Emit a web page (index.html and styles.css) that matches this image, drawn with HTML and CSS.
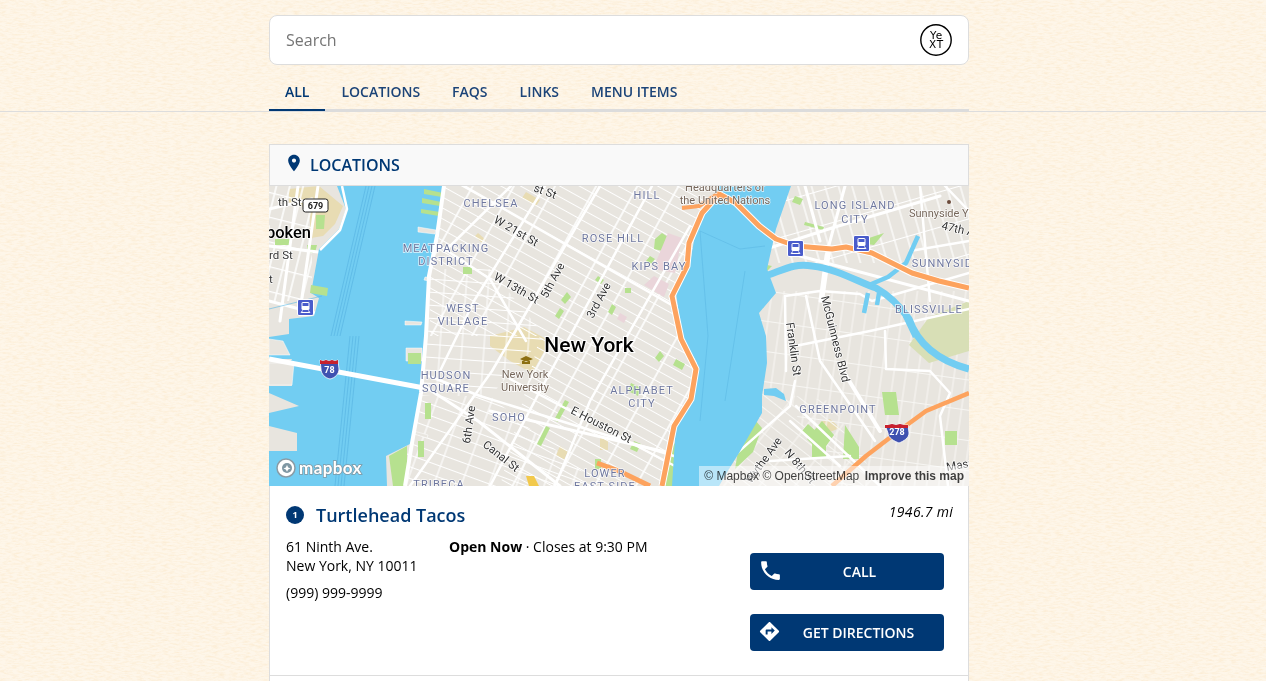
FILE: index.html
```html
<!DOCTYPE html>
<html lang="en">
<head>
<meta charset="utf-8">
<title>Answers</title>
<link rel="stylesheet" href="styles.css">
</head>
<body>
<svg class="paper" aria-hidden="true" width="1266" height="681">
  <filter id="grain" x="0" y="0" width="100%" height="100%">
    <feTurbulence type="fractalNoise" baseFrequency="0.16 0.55" numOctaves="3" seed="7"/>
    <feColorMatrix type="matrix" values="0 0 0 0 0.96  0 0 0 0 0.80  0 0 0 0 0.58  2.4 0 0 0 -0.95"/>
  </filter>
  <rect width="1266" height="681" fill="#fef6e9"/>
  <rect width="1266" height="681" filter="url(#grain)" opacity=".55"/>
</svg>

<header class="header">
  <div class="column">
    <div class="search">
      <span class="search-placeholder">Search</span>
      <svg class="yext" viewBox="0 0 32 32" width="32" height="32" role="img" aria-label="Yext">
        <circle cx="16" cy="16" r="15.2" fill="#fff" stroke="#000" stroke-width="1.4"/>
        <text class="yext-text" x="16.5" y="15">Ye</text>
        <text class="yext-text" x="16.5" y="23.5">XT</text>
      </svg>
    </div>
    <nav class="tabs">
      <a class="tab tab-active">ALL</a>
      <a class="tab">LOCATIONS</a>
      <a class="tab">FAQS</a>
      <a class="tab">LINKS</a>
      <a class="tab">MENU ITEMS</a>
    </nav>
  </div>
</header>

<main class="column main">
  <section class="card">
    <h2 class="card-title">
      <svg class="pin" viewBox="0 0 24 24" width="20" height="20"><path d="M12 2C8.13 2 5 5.13 5 9c0 5.25 7 13 7 13s7-7.75 7-13c0-3.87-3.13-7-7-7zm0 9.5c-1.38 0-2.5-1.12-2.5-2.5s1.12-2.5 2.5-2.5 2.5 1.12 2.5 2.5-1.12 2.5-2.5 2.5z"/></svg>
      <span>LOCATIONS</span>
    </h2>

    <div class="map">
      <svg class="map-svg" viewBox="269 185 700 300" width="700" height="300" role="img" aria-label="Map of New York">
        <defs>
          <pattern id="g-man" width="36" height="9.5" patternUnits="userSpaceOnUse" patternTransform="rotate(29 600 300)">
            <path d="M0 .5H36" stroke="#fff" stroke-width="1"/><path d="M1 0V9.5" stroke="#fff" stroke-width="1.6"/>
          </pattern>
          <pattern id="g-vil" width="22" height="13" patternUnits="userSpaceOnUse" patternTransform="rotate(4)">
            <path d="M0 .5H22M1 0V13" stroke="#fff" stroke-width="1"/>
          </pattern>
          <pattern id="g-low" width="26" height="11" patternUnits="userSpaceOnUse" patternTransform="rotate(20)">
            <path d="M0 .5H26M1 0V11" stroke="#fff" stroke-width="1.1"/>
          </pattern>
          <pattern id="g-hob" width="13" height="24" patternUnits="userSpaceOnUse" patternTransform="rotate(14)">
            <path d="M0 .5H13M1 0V24" stroke="#fff" stroke-width="1.5"/>
          </pattern>
          <pattern id="g-qns" width="13" height="34" patternUnits="userSpaceOnUse" patternTransform="rotate(-16)">
            <path d="M0 .5H13M1 0V34" stroke="#fff" stroke-width="1.2"/>
          </pattern>
          <pattern id="g-grn" width="12" height="30" patternUnits="userSpaceOnUse" patternTransform="rotate(8)">
            <path d="M0 .5H12M1 0V30" stroke="#f7f6f3" stroke-width="1.1"/>
          </pattern>
          <pattern id="g-wil" width="28" height="10" patternUnits="userSpaceOnUse" patternTransform="rotate(38)">
            <path d="M0 .5H28M1 0V10" stroke="#f7f6f3" stroke-width="1.1"/>
          </pattern>
          <symbol id="train" viewBox="0 0 17 17">
            <rect x=".5" y=".5" width="16" height="16" rx="1.5" fill="#4a5ccb" stroke="#fff"/>
            <rect x="4.5" y="3" width="8" height="8" rx="1.5" fill="#fff"/>
            <rect x="5.5" y="4" width="6" height="3" fill="#4a5ccb"/>
            <path d="M5.5 11.5 4 14M11.5 11.5 13 14M4.5 13.5H12.5" stroke="#fff" fill="none" stroke-width="1"/>
          </symbol>
        </defs>

        <rect x="269" y="185" width="700" height="300" fill="#e8e5df"/>
        <!-- campuses lie under the street grid -->
        <g fill="#e8dcb3">
          <path d="M490 335l34-9 26 14-18 32-22-12-20-15zM526 191l14 8-4 6-14-8zM478 232l8 7-4 3-7-7zM820 421l10-3 10 9-10 4zM600 437h8v12h-8zM560 445l8 5-4 9-8-5z"/>
          <path d="M289 188l30-3 24 20-8 18-12 12-12 2-2-30-20-4zM310 225l6 5-4 8-5-2z"/>
        </g>
        <path fill="url(#g-hob)" d="M269 185H312V300H269Z"/>
        <path fill="url(#g-man)" d="M430 185H705V485H500L540 335H430Z"/>
        <path fill="url(#g-vil)" d="M425 268H490L545 335 490 395H420Z"/>
        <path fill="url(#g-low)" d="M415 395H490L600 485H400Z"/>
        <path fill="url(#g-qns)" d="M755 185H969V262H755Z"/>
        <path fill="url(#g-grn)" d="M760 290H969V485H830L790 400 760 380Z"/>
        <path fill="url(#g-wil)" d="M762 390 830 400 880 485H700Z"/>

        <!-- parks -->
        <g fill="#b6e18f">
          <path d="M316 214h9l-1 14h-8zM275 238h16v6h-16zM307 244h10l-2 8h-8z"/>
          <path d="M463 266h9v7h-9zM567 291l4 5-6 7-4-4zM598 275l6 4-3 4-6-4zM612 303l4 3-4 8-4-3zM564 310l-5 8-4-3 5-8z"/>
          <path d="M662 232l9 6-8 12-9-2 1-10zM650 255l5 3-4 5-5-3zM625 287h6v5h-6z"/>
          <path d="M660 350l4 5-5 6-4-4zM565 399l4 2-11 20-4-2zM546 425l4 2-9 18-4-2zM595 458h6v10h-6z"/>
          <path d="M425 402h6v16h-6zM418 440h6v16h-6z"/>
          <path d="M683 430l-8 55h-10l8-40zM634 440l7 3-4 8-7-3zM676 358l9 5-3 6-9-5zM631 382l10 5-3 8-10-5z"/>
          <path d="M882 391h14l3 23h-14zM822 420l12 14-13 18-14-14zM808 423l10 9-7 7-9-9zM845 424l14 22v12h-16zM812 440l14 0v16h-14zM945 430h12v14h-12z"/>
          <path d="M748 411l14 16-9 24-18 17 3-18zM762 215l6-10 3 5-5 10zM795 195l8 3-3 6-8-3zM805 221l19 5-1 3-19-5zM884 232l-10 12-8-1 3-6zM762 263l10 2-6 6-11-3-2-11 3-8 4 8zM770 296l-7 11-6-3 7-11z"/>
        </g>
        <path fill="#d8dfb6" d="M969 300v50l-40 12-20-18 20-28z"/>
        <g fill="#ead5da">
          <path d="M668 232l14 5-7 35-22-4zM654 275l15 8-5 13-20-12zM620 312l7 4-3 6-7-4z"/>
        </g>

        <!-- major streets -->
        <g fill="none" stroke="#fff" stroke-linecap="round" stroke-linejoin="round">
          <path stroke-width="2.5" d="M511 185 445 250M545 185 474 300 440 370M600 185 492 370 410 485M652 185 540 390 490 485M690 225 590 400 555 485"/>
          <path stroke-width="2.5" d="M464 185 710 326M440 245 490 278 526 340M426 374 480 395 690 460M510 378 690 473"/>
          <path stroke-width="3" d="M424 385 478 420 560 485M490 410 670 452"/>
          <path stroke-width="3" d="M269 300 330 316M269 208 312 198M269 245 318 251M298 185 280 320M318 185 300 310"/>
          <path stroke-width="3" d="M805 185 820 240 M845 185 826 255 820 300M760 250 835 226 940 195M800 255 969 300"/>
          <path stroke-width="4" d="M829 250 822 300"/>
          <path stroke-width="2.5" d="M785 295 820 290 860 293 872 300 969 272M785 295 786 370M806 295 820 360 875 440M885 330 886 368 930 370 950 392 940 415 948 485"/>
          <path stroke-width="2.5" d="M795 380 790 405 700 485M796 405 880 485M770 460 850 455M790 420 840 465"/>
          <path stroke-width="4" d="M840 365 880 430"/>
          <path stroke-width="2.5" d="M795 345 870 330 969 308"/>
          <path stroke-width="2.5" d="M945 185 969 210M920 185 930 300M969 240 910 250"/>
        </g>

        <!-- water -->
        <path fill="#72cdf2" d="M337 185 346 208 339 228 319 248 311 292 319 297 314 315 289 318 289 333 269 336V358H292L290 362 292 385H269V392L299 405 269 412V425L297 432V450H269V485H387L386 455 412 442 421 392 426 335 429 272 439 235 442 185Z"/>
        <path fill="#72cdf2" d="M719 185 702 212 696 228 689 268 676 292 682 335 697 362 691 395 676 422 672 485H719L729 468 739 452 762 412 762 395 767 362 766 335 759 312 776 292 767 268 776 228 791 185Z"/>
        <g fill="none" stroke="#72cdf2" stroke-linejoin="round">
          <path stroke-width="7" d="M768 274C785 268 795 262 812 265 838 268 860 282 876 287 892 296 902 308 909 318 916 338 932 358 969 368"/>
          <path stroke-width="4.5" d="M869 284 888 276 906 262 918 235"/>
          <path stroke-width="4.5" d="M868 292 864 312M879 292 877 304M905 315 915 336"/>
        </g>
        <path fill="#72cdf2" d="M764 388l12-1 8 6 2 7-12-5-10-1z"/>
        <g fill="none" stroke="#5cb8e4" stroke-width=".8">
          <path d="M375 185 340 335M372 185 337 335M369 185 334 335M366 185 331 335M335 485 350 335M338 485 353 335M341 485 356 335M344 485 359 335"/>
          <path stroke-width=".6" d="M322 295 269 308M700 230 740 248 765 245M700 230 708 335M745 270 735 335M735 335 725 400M708 335 700 420"/>
        </g>
        <g fill="#b6e18f">
          <path d="M424 188l19 4-1 4-18-3zM422 197l19 4-1 4-18-3zM421 208l19 3-1 4-18-3z"/>
        </g>
        <g fill="#e8e5df" stroke="#fff" stroke-width=".5">
          <path d="M418 226l18 3-1 4-17-2zM425 276l5 0-1 4-5-1zM405 320l17 1-1 3-16 0zM406 347h16v13h-16zM414 430l14 4-1 3-13-4z"/>
          <path d="M269 354 290 354 283 340 269 338zM269 362h25l-2 22h-23z"/>
        </g>
        <path fill="#b6e18f" d="M408 352h13v11h-13zM311 284l17 3-1 8-17-3zM389 455l18-10 0 40h-14z"/>

        <!-- roads that run along the shore or cross the water -->
        <g fill="none" stroke="#fff" stroke-linejoin="round">
          <path stroke-width="4" d="M444 185 437 235 429 275 426 335 421 392 412 442 405 485"/>
          <path stroke-width="2.5" d="M342 185 347 208 340 229 320 249"/>
          <path stroke-width="5" d="M269 358 424 387"/>
        </g>

        <!-- highways -->
        <g fill="none" stroke="#fff" stroke-width="7" stroke-linejoin="round">
          <path d="M662 485 674 425 691 398 696 368 681 338 672 295 687 265 689 242 702 212 719 193 736 202 759 225 776 238 796 245 832 248 846 246 872 252 912 272 939 280 969 287"/>
        </g>
        <g fill="none" stroke="#fda35e" stroke-linejoin="round" stroke-linecap="butt">
          <path stroke-width="5" d="M662 485 674 425 691 398 696 368 681 338 672 295 687 265 689 242 702 212 719 193 736 202 759 225 776 238 796 245 832 248 846 246 872 252 912 272 939 280 969 287"/>
          <path stroke-width="4" d="M682 207 699 205 719 192"/>
          <path stroke-width="4.5" d="M969 392 926 410 896 432 866 455 832 485"/>
          <path stroke-width="5" d="M597 462 619 470 650 485"/>
        </g>
        <path fill="#f2c94c" d="M526 475l8 0 5 10h-10z"/>

        <!-- transit and shields -->
        <use href="#train" x="297" y="298" width="17" height="17"/>
        <use href="#train" x="787" y="239" width="17" height="17"/>
        <use href="#train" x="853" y="234" width="17" height="17"/>
        <g>
          <path d="M320 359l3 1 3-1 3 1 3-1 3 1 3-1 1 9c0 5-4 9-9 10-5-1-9-5-9-10z" fill="#3f51b0" stroke="#fff" stroke-width=".8"/>
          <path d="M320 359l3 1 3-1 3 1 3-1 3 1 3-1v4h-18z" fill="#c8202d"/>
          <text class="shield-num" x="329.5" y="372">78</text>
        </g>
        <g>
          <path d="M885 424l3 0 4-1 4 1 4-1 4 1 4 0 1 8c0 5-5 8-10 10-5-2-11-5-11-10z" fill="#3f51b0" stroke="#fff" stroke-width=".8"/>
          <path d="M885 424l3 0 4-1 4 1 4-1 4 1 4 0 0 3h-23z" fill="#c8202d"/>
          <text class="shield-num" x="897" y="434">278</text>
        </g>
        <rect x="303" y="198" width="25" height="13" rx="2.5" fill="#fff" stroke="#222" stroke-width="1"/>
        <text class="road-num" x="315.5" y="208">679</text>
        <path d="M520 358l6-3 7 3-7 3zM522 360v3h8v-3" fill="#8c6f10"/>
        <circle cx="949" cy="201" r="2" fill="#6b4a3a"/>

        <!-- street labels -->
        <g class="street">
          <text x="278" y="205" text-anchor="start">th St</text>
          <text x="269" y="258">rd St</text>
          <text x="269" y="282">t</text>
          <text transform="translate(533 190) rotate(20)">st St</text>
          <text transform="translate(493 221) rotate(30)">W 21st St</text>
          <text transform="translate(493 278) rotate(30)">W 13th St</text>
          <text transform="translate(547 298) rotate(-62)">5th Ave</text>
          <text transform="translate(593 318) rotate(-62)">3rd Ave</text>
          <text transform="translate(941 228) rotate(13)">47th Ave</text>
          <text transform="translate(821 296) rotate(76)">McGuinness Blvd</text>
          <text transform="translate(786 322) rotate(82)">Franklin St</text>
          <text transform="translate(470 443) rotate(-82)">6th Ave</text>
          <text transform="translate(482 445) rotate(38)">Canal St</text>
          <text transform="translate(570 412) rotate(27)">E Houston St</text>
          <text transform="translate(751 483) rotate(-54)">Wythe Ave</text>
          <text transform="translate(784 452) rotate(50)">N 8th St</text>
          <text transform="translate(947 470) rotate(-10)">Maspeth</text>
        </g>
        <g class="place">
          <text x="491" y="206">CHELSEA</text>
          <text x="446" y="251">MEATPACKING</text>
          <text x="446" y="264">DISTRICT</text>
          <text x="463" y="311">WEST</text>
          <text x="463" y="324">VILLAGE</text>
          <text x="613" y="241">ROSE HILL</text>
          <text x="659" y="269">KIPS BAY</text>
          <text x="647" y="198">HILL</text>
          <text x="855" y="208">LONG ISLAND</text>
          <text x="855" y="222">CITY</text>
          <text x="946" y="266">SUNNYSIDE</text>
          <text x="929" y="312">BLISSVILLE</text>
          <text x="446" y="378">HUDSON</text>
          <text x="446" y="391">SQUARE</text>
          <text x="509" y="420">SOHO</text>
          <text x="642" y="393">ALPHABET</text>
          <text x="642" y="406">CITY</text>
          <text x="838" y="412">GREENPOINT</text>
          <text x="605" y="476">LOWER</text>
          <text x="605" y="489">EAST SIDE</text>
          <text x="439" y="487">TRIBECA</text>
        </g>
        <g class="poi">
          <text x="725" y="190">Headquarters of</text>
          <text x="725" y="203">the United Nations</text>
          <text x="525" y="377">New York</text>
          <text x="525" y="390">University</text>
          <text x="909" y="216" class="poi-start">Sunnyside Y</text>
        </g>
        <text class="city" x="589" y="351">New York</text>
        <text class="town" x="311" y="237">Hoboken</text>

        <!-- mapbox logo -->
        <g>
          <circle cx="286" cy="467" r="9" fill="#fff" stroke="#8a9ba5" stroke-width="1.5"/>
          <circle cx="287" cy="467" r="5" fill="#7f97a3"/>
          <path d="M287 464l1.2 2.4 2.3 1-2.3 1-1.2 2.4-1.2-2.4-2.3-1 2.3-1z" fill="#fff"/>
          <text class="mapbox" x="299" y="473">mapbox</text>
        </g>
      </svg>
      <div class="attrib">© Mapbox © OpenStreetMap <b>Improve this map</b></div>
    </div>

    <article class="result">
      <div class="result-main">
        <h3 class="result-title"><span class="badge">1</span><a>Turtlehead Tacos</a></h3>
        <div class="result-info">
          <div class="result-contact">
            <p class="address">61 Ninth Ave.<br>New York, NY 10011</p>
            <p class="phone">(999) 999-9999</p>
          </div>
          <p class="hours"><b>Open Now</b> · Closes at 9:30 PM</p>
        </div>
      </div>
      <div class="result-side">
        <p class="distance">1946.7 mi</p>
        <a class="btn btn-call">
          <svg viewBox="0 0 24 24" width="25" height="25"><path d="M6.62 10.79c1.44 2.83 3.76 5.14 6.59 6.59l2.2-2.2c.27-.27.67-.36 1.02-.24 1.12.37 2.33.57 3.57.57.55 0 1 .45 1 1V20c0 .55-.45 1-1 1-9.39 0-17-7.61-17-17 0-.55.45-1 1-1h3.5c.55 0 1 .45 1 1 0 1.25.2 2.45.57 3.57.11.35.03.74-.25 1.02l-2.2 2.2z"/></svg>
          <span>CALL</span>
        </a>
        <a class="btn btn-dir">
          <svg viewBox="0 0 24 24" width="23" height="23"><path d="M21.71 11.29l-9-9c-.39-.39-1.02-.39-1.41 0l-9 9c-.39.39-.39 1.02 0 1.41l9 9c.39.39 1.02.39 1.41 0l9-9c.39-.38.39-1.01 0-1.41zM14 14.5V12h-4v3H8v-4c0-.55.45-1 1-1h5V7.5l3.5 3.5-3.5 3.5z"/></svg>
          <span>GET DIRECTIONS</span>
        </a>
      </div>
    </article>
    <div class="result-next"></div>
  </section>
</main>
</body>
</html>
```

FILE: styles.css
```css
* { box-sizing: border-box; }
html, body { height: 100%; overflow: hidden; }
body {
  margin: 0;
  font-family: "Open Sans", "Liberation Sans", sans-serif;
  color: #000;
  font-size: 14px;
}
h2, h3, p { margin: 0; }

.paper { position: fixed; left: 0; top: 0; z-index: -1; }

.column { width: 700px; margin-left: 269px; }

.header { padding-top: 15px; border-bottom: 1px solid #ddd; }

.search {
  height: 50px;
  background: #fff;
  border: 1px solid #ddd;
  border-radius: 8px;
  display: flex;
  align-items: center;
  justify-content: space-between;
  padding: 0 16px;
}
.search-placeholder { font-size: 16px; color: #757575; }
.yext { display: block; }
.yext-text {
  font: 400 10.5px "DejaVu Sans", sans-serif;
  letter-spacing: .8px;
  text-anchor: middle;
  fill: #000;
}

.tabs {
  height: 47px;
  margin-bottom: -1px;
  border-bottom: 3px solid #dcdcdc;
  display: flex;
}
.tab {
  padding: 9px 16px 0;
  margin-bottom: -2px;
  display: flex;
  align-items: center;
  font-size: 14px;
  font-weight: 600;
  color: #1c4478;
  border-bottom: 2px solid transparent;
}
.tab-active { border-bottom-color: #003874; color: #003874; }

.main { margin-top: 32px; }

.card-title {
  height: 42px;
  padding: 0 16px;
  background: #f9f9f9;
  border: 1px solid #ddd;
  display: flex;
  align-items: center;
  gap: 6px;
  font-size: 16px;
  font-weight: 600;
  color: #003874;
}
.pin { fill: #003874; margin-top: -4px; margin-left: -2px; }

.map { position: relative; height: 300px; overflow: hidden; }
.map-svg { display: block; }
.attrib {
  position: absolute;
  right: 0;
  bottom: 0;
  height: 20px;
  padding: 0 5px;
  white-space: pre;
  background: rgba(255, 255, 255, .5);
  font: 12px/20px "Liberation Sans", sans-serif;
  color: rgba(0, 0, 0, .75);
}
.attrib b { font-weight: 700; margin-left: 2px; }

.street text {
  font: 400 11.5px Roboto, sans-serif;
  fill: #333;
  stroke: #fff;
  stroke-width: 1.4px;
  paint-order: stroke;
}
.place text {
  font: 400 11px Roboto, sans-serif;
  letter-spacing: 1.1px;
  text-anchor: middle;
  fill: #6f789f;
  stroke: rgba(255, 255, 255, .8);
  stroke-width: 1.5px;
  paint-order: stroke;
}
.poi text {
  font: 400 11px Roboto, sans-serif;
  text-anchor: middle;
  fill: #76675b;
  stroke: rgba(255, 255, 255, .8);
  stroke-width: 1.5px;
  paint-order: stroke;
}
.poi .poi-start { text-anchor: start; }
.city {
  font: 500 21px Roboto, sans-serif;
  text-anchor: middle;
  fill: #000;
  stroke: #fff;
  stroke-width: 2px;
  paint-order: stroke;
}
.town {
  font: 500 16.5px Roboto, sans-serif;
  text-anchor: end;
  fill: #000;
  stroke: #fff;
  stroke-width: 1.5px;
  paint-order: stroke;
}
.shield-num { font: 700 9px Roboto, sans-serif; fill: #fff; text-anchor: middle; }
.road-num { font: 700 9px Roboto, sans-serif; fill: #222; text-anchor: middle; }
.mapbox {
  font: 700 17px Lato, sans-serif;
  letter-spacing: .4px;
  fill: #fff;
  stroke: #7f97a3;
  stroke-width: 1.6px;
  paint-order: stroke;
}

.result {
  height: 190px;
  padding: 16px 15px 0 16px;
  background: #fff;
  border: 1px solid #ddd;
  border-top: 0;
  display: flex;
  justify-content: space-between;
}
.result-next {
  height: 5px;
  background: #fff;
  border: 1px solid #ddd;
  border-width: 0 1px;
}
.result-title {
  display: flex;
  align-items: center;
  gap: 12px;
  font-size: 18px;
  font-weight: 600;
  color: #003874;
  line-height: 26px;
}
.badge {
  width: 18px;
  height: 18px;
  border-radius: 50%;
  background: #003874;
  color: #fff;
  font-size: 9px;
  font-weight: 700;
  line-height: 18px;
  text-align: center;
}
.result-info { margin-top: 9px; display: flex; line-height: 19px; }
.result-contact { width: 163px; }
.phone { margin-top: 8px; }

.result-side { width: 203px; display: flex; flex-direction: column; }
.distance { font-style: italic; letter-spacing: .3px; text-align: right; line-height: 19px; margin-bottom: 32px; }
.btn {
  width: 194px;
  height: 37px;
  padding: 0 8px;
  background: #003874;
  color: #fff;
  border-radius: 4px;
  font-weight: 600;
  display: flex;
  align-items: center;
}
.btn svg { fill: #fff; flex: none; margin-top: -2px; }
.btn span { flex: 1; text-align: center; }
.btn-dir { margin-top: 24px; }
```
